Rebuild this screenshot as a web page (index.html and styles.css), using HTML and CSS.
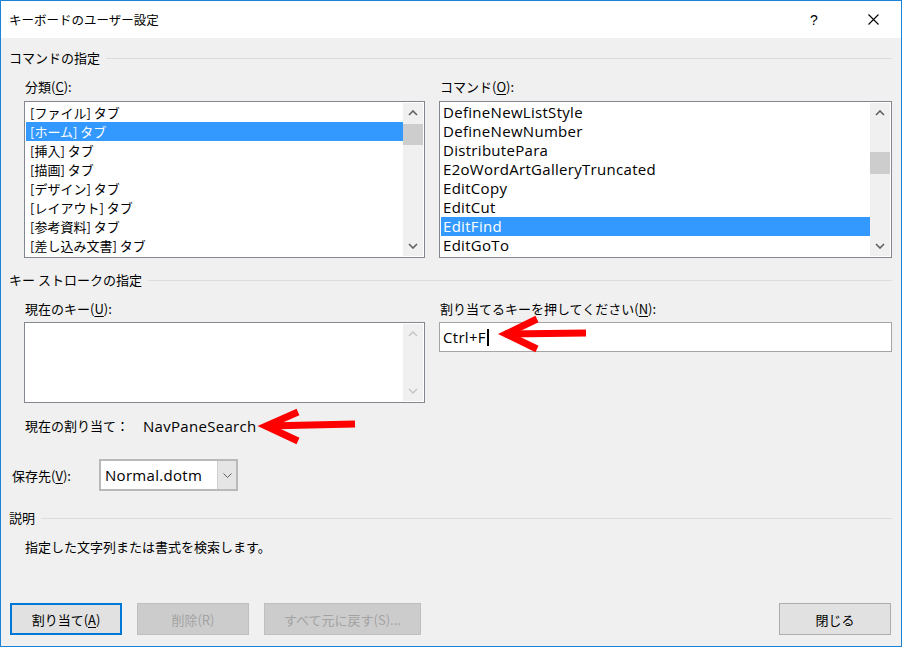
FILE: index.html
```html
<!DOCTYPE html>
<html lang="ja">
<head>
    <meta charset="UTF-8">
    <title>キーボードのユーザー設定</title>
    <link rel="stylesheet" href="styles.css">
</head>
<body>
    <div class="dialog">
        <div class="titlebar">
            <span class="title">キーボードのユーザー設定</span>
            <span class="help">?</span>
            <span class="close">
                <svg width="11" height="11" viewBox="0 0 11 11"><path d="M0.5 0.5L10.5 10.5M10.5 0.5L0.5 10.5" stroke="#000" stroke-width="1.1" fill="none"/></svg>
            </span>
        </div>

        <div class="main">
            <div class="group-head"><span>コマンドの指定</span></div>
            <div class="cols cols-top">
                <div class="col col-left">
                    <div class="label">分類(<u>C</u>):</div>
                    <div class="listbox">
                        <ul class="items">
                            <li>[ファイル] タブ</li>
                            <li class="selected">[ホーム] タブ</li>
                            <li>[挿入] タブ</li>
                            <li>[描画] タブ</li>
                            <li>[デザイン] タブ</li>
                            <li>[レイアウト] タブ</li>
                            <li>[参考資料] タブ</li>
                            <li>[差し込み文書] タブ</li>
                        </ul>
                        <div class="vscroll">
                            <div class="sb-btn"><svg width="10" height="6" viewBox="0 0 10 6"><path d="M1 5L5 1L9 5" class="chev"/></svg></div>
                            <div class="sb-track"><div class="sb-thumb thumb-left"></div></div>
                            <div class="sb-btn"><svg width="10" height="6" viewBox="0 0 10 6"><path d="M1 1L5 5L9 1" class="chev"/></svg></div>
                        </div>
                    </div>
                </div>
                <div class="col col-right">
                    <div class="label">コマンド(<u>O</u>):</div>
                    <div class="listbox">
                        <ul class="items en">
                            <li>DefineNewListStyle</li>
                            <li>DefineNewNumber</li>
                            <li>DistributePara</li>
                            <li>E2oWordArtGalleryTruncated</li>
                            <li>EditCopy</li>
                            <li>EditCut</li>
                            <li class="selected">EditFind</li>
                            <li>EditGoTo</li>
                        </ul>
                        <div class="vscroll">
                            <div class="sb-btn"><svg width="10" height="6" viewBox="0 0 10 6"><path d="M1 5L5 1L9 5" class="chev"/></svg></div>
                            <div class="sb-track"><div class="sb-thumb thumb-right"></div></div>
                            <div class="sb-btn"><svg width="10" height="6" viewBox="0 0 10 6"><path d="M1 1L5 5L9 1" class="chev"/></svg></div>
                        </div>
                    </div>
                </div>
            </div>

            <div class="group-head group-keys"><span>キー ストロークの指定</span></div>
            <div class="cols cols-mid">
                <div class="col col-left">
                    <div class="label label-mid">現在のキー(<u>U</u>):</div>
                    <div class="listbox keybox">
                        <ul class="items"></ul>
                        <div class="vscroll disabled">
                            <div class="sb-btn"><svg width="10" height="6" viewBox="0 0 10 6"><path d="M1 5L5 1L9 5" class="chev"/></svg></div>
                            <div class="sb-track"></div>
                            <div class="sb-btn"><svg width="10" height="6" viewBox="0 0 10 6"><path d="M1 1L5 5L9 1" class="chev"/></svg></div>
                        </div>
                    </div>
                    <div class="assign">
                        <span class="assign-label">現在の割り当て：</span>
                        <span class="en">NavPaneSearch</span>
                    </div>
                </div>
                <div class="col col-right">
                    <div class="label label-mid">割り当てるキーを押してください(<u>N</u>):</div>
                    <div class="keyinput en">Ctrl+F<span class="caret"></span></div>
                </div>
            </div>

            <div class="save-row">
                <span class="save-label">保存先(<u>V</u>):</span>
                <div class="combo">
                    <span class="combo-value en">Normal.dotm</span>
                    <span class="combo-btn"><svg width="9" height="5" viewBox="0 0 9 5"><path d="M0.5 0.5L4.5 4.5L8.5 0.5" stroke="#606060" stroke-width="1" fill="none"/></svg></span>
                </div>
            </div>

            <div class="group-head group-desc"><span>説明</span></div>
            <p class="desc">指定した文字列または書式を検索します。</p>

            <div class="footer">
                <div class="btn-group">
                    <button class="btn btn-default">割り当て(<u>A</u>)</button>
                    <button class="btn" disabled>削除(R)</button>
                    <button class="btn btn-wide" disabled>すべて元に戻す(S)...</button>
                </div>
                <button class="btn">閉じる</button>
            </div>
        </div>

        <!-- red annotation arrows drawn over the dialog -->
        <svg class="annot" width="902" height="647" viewBox="0 0 902 647">
            <g stroke="#ff0000" stroke-width="7" fill="none" stroke-linejoin="miter" stroke-linecap="butt">
                <path d="M505 334L586 333"/>
                <path d="M537 319L506 334L537 349"/>
                <path d="M266 426L355 424"/>
                <path d="M298 412L266 426L298 441"/>
            </g>
        </svg>
    </div>
</body>
</html>
```

FILE: styles.css
```css
* {
    box-sizing: border-box;
    margin: 0;
    padding: 0;
}

body {
    font-family: "Noto Sans CJK JP", sans-serif;
    font-size: 13px;
    color: #000;
    background-color: #fff;
}

.en {
    font-family: "Open Sans", "Noto Sans CJK JP", sans-serif;
    font-size: 15px;
    letter-spacing: 0.3px;
}

u {
    text-underline-offset: 2px;
}

.dialog {
    position: relative;
    width: 902px;
    height: 647px;
    border: 1px solid #1883d7;
    background-color: #f0f0f0;
    display: flex;
    flex-direction: column;
}

.titlebar {
    height: 37px;
    background-color: #fff;
    display: flex;
    align-items: center;
    padding-left: 8px;
}

.title {
    flex: 1;
    font-size: 12.5px;
}

.help {
    font-family: "Liberation Sans", sans-serif;
    font-size: 14px;
    width: 40px;
    margin-right: 28px;
    text-align: center;
}

.close {
    width: 22px;
    margin-right: 17px;
    display: flex;
    justify-content: center;
}

.main {
    flex: 1;
    display: flex;
    flex-direction: column;
    padding: 0 9px 11px 8px;
}

.group-head {
    height: 20px;
    line-height: 20px;
    margin-top: 10px;
    display: flex;
    align-items: center;
}

.group-head::after {
    content: "";
    flex: 1;
    border-top: 1px solid #dcdcdc;
    margin-left: 6px;
}

.group-keys {
    margin-top: 12px;
}

.group-desc {
    margin-top: 17px;
}

.cols {
    display: flex;
    gap: 14px;
    padding-left: 15px;
}

.cols-top {
    margin-top: 9px;
}

.cols-mid {
    margin-top: 9px;
}

.col-left {
    width: 401px;
}

.col-right {
    flex: 1;
}

.label {
    height: 20px;
    line-height: 20px;
    margin-bottom: 4px;
    padding-left: 1px;
}

.label-mid {
    margin-bottom: 3px;
}

.listbox {
    height: 157px;
    border: 1px solid #828790;
    background-color: #fff;
    padding: 1px;
    display: flex;
}

.items {
    flex: 1;
    list-style: none;
}

.items li {
    height: 19px;
    line-height: 19px;
    padding-left: 4px;
    white-space: nowrap;
}

.items.en li {
    padding-left: 2px;
}

.items li.selected {
    background-color: #3399ff;
    color: #fff;
}

.vscroll {
    width: 20px;
    background-color: #f0f0f0;
    display: flex;
    flex-direction: column;
}

.sb-btn {
    height: 20px;
    display: flex;
    align-items: center;
    justify-content: center;
}

.chev {
    stroke: #606060;
    stroke-width: 1.6;
    fill: none;
}

.vscroll.disabled .chev {
    stroke: #c2c2c2;
    stroke-width: 1.3;
}

.sb-track {
    flex: 1;
}

.sb-thumb {
    background-color: #cdcdcd;
}

.thumb-left {
    margin-top: 1px;
    height: 21px;
}

.thumb-right {
    margin-top: 29px;
    height: 22px;
}

.keybox {
    height: 81px;
}

.assign {
    margin-top: 13px;
    height: 20px;
    line-height: 20px;
    display: flex;
    align-items: center;
    padding-left: 1px;
}

.assign-label {
    width: 118px;
}

.keyinput {
    height: 30px;
    border: 1px solid #a5a5a5;
    background-color: #fff;
    padding-left: 3px;
    display: flex;
    align-items: center;
}

.caret {
    display: inline-block;
    width: 2px;
    height: 17px;
    background-color: #000;
    margin-left: 1px;
}

.save-row {
    margin-top: 23px;
    display: flex;
    align-items: center;
    padding-left: 3px;
}

.save-label {
    width: 87px;
}

.combo {
    width: 139px;
    height: 32px;
    border: 2px solid #b9b9b9;
    background-color: #fff;
    display: flex;
}

.combo-value {
    flex: 1;
    padding-left: 4px;
    line-height: 28px;
}

.combo-btn {
    width: 19px;
    background-color: #e5e5e5;
    border-left: 1px solid #d0d0d0;
    display: flex;
    align-items: center;
    justify-content: center;
}

.desc {
    margin-top: 9px;
    padding-left: 16px;
    height: 20px;
    line-height: 20px;
}

.footer {
    margin-top: auto;
    display: flex;
    justify-content: space-between;
    padding: 0 1px 0 1px;
}

.btn-group {
    display: flex;
    gap: 15px;
}

.btn {
    width: 112px;
    height: 32px;
    font-family: "Noto Sans CJK JP", sans-serif;
    font-size: 13px;
    color: #000;
    background-color: #e1e1e1;
    border: 1px solid #adadad;
}

.btn-default {
    border: 2px solid #0078d7;
}

.btn-wide {
    width: 157px;
}

.btn:disabled {
    background-color: #cccccc;
    border-color: #bfbfbf;
    color: #a3a3a3;
}

.annot {
    position: absolute;
    left: -1px;
    top: -1px;
    pointer-events: none;
}
```
